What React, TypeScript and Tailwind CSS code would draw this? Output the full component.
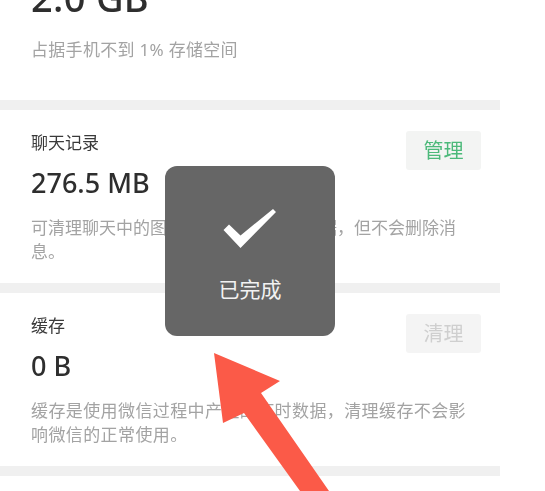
const FONT = "font-['Noto_Sans','Noto_Sans_CJK_SC',sans-serif]"

function Section({ title, size, desc, action, muted }: {
  title: string
  size: string
  desc: string
  action: string
  muted?: boolean
}) {
  return (
    <section className="relative h-[173px] pl-[31px] pr-[30px] pt-[21px]">
      <h2 className="text-[17px] leading-[24px] text-[#3a3a3a]">{title}</h2>
      <p className="mt-[10px] text-[27px] leading-[36px] font-medium text-[#2e2e2e]">{size}</p>
      <p className={`mt-[15px] text-[17px] leading-[24px] text-[#a3a3a3] ${muted ? 'w-[440px] tracking-[0.4px]' : 'w-[430px]'}`}>{desc}</p>
      <button
        className={`absolute right-[19px] top-[21px] flex h-[39px] w-[75px] items-center justify-center rounded-[3px] text-[20px] ${
          muted ? 'bg-[#f4f4f4] text-[#cfcfcf]' : 'bg-[#f3f4f3] text-[#4cb97a]'
        }`}
      >
        {action}
      </button>
    </section>
  )
}

export default function App() {
  return (
    <div className={`relative h-[491px] w-[545px] overflow-hidden bg-white ${FONT}`}>
      <div className="w-[500px] blur-[0.5px]">
        <div className="flex h-[100px] flex-col pl-[31px]">
          <p className="-mt-[25px] text-[38px] leading-[44px] font-medium tracking-[0.3px] text-[#2e2e2e]">2.0 GB</p>
          <p className="mt-[19px] text-[17px] leading-[24px] tracking-[0.3px] text-[#a3a3a3]">占据手机不到 1% 存储空间</p>
        </div>
        <div className="h-[10px] bg-[#f0f0f0]" />
        <Section
          title="聊天记录"
          size="276.5 MB"
          desc="可清理聊天中的图片、视频、文件等数据，但不会删除消息。"
          action="管理"
        />
        <div className="h-[10px] bg-[#f0f0f0]" />
        <Section
          title="缓存"
          size="0 B"
          desc="缓存是使用微信过程中产生的临时数据，清理缓存不会影响微信的正常使用。"
          action="清理"
          muted
        />
        <div className="h-[10px] bg-[#f0f0f0]" />
      </div>

      {/* done toast */}
      <div className="absolute left-[165px] top-[166px] flex h-[170px] w-[170px] flex-col items-center rounded-[12px] bg-[#666666] pt-[42px]">
        <svg width="54" height="40" viewBox="0 0 54 40" fill="none" aria-hidden="true">
          <path d="M0.5 22L6 16.5L17.5 27.5L50 1L53 4L17.5 40Z" fill="#ffffff" />
        </svg>
        <span className="mt-[26px] text-[21px] leading-[30px] text-[#f2f2f2]">已完成</span>
      </div>

      {/* red annotation arrow */}
      <svg className="absolute left-0 top-0" width="545" height="491" viewBox="0 0 545 491" aria-hidden="true">
        <path d="M214 353L280 381L261 393L329 491H300L244 413L223 423Z" fill="#fb5a48" />
      </svg>
    </div>
  )
}
